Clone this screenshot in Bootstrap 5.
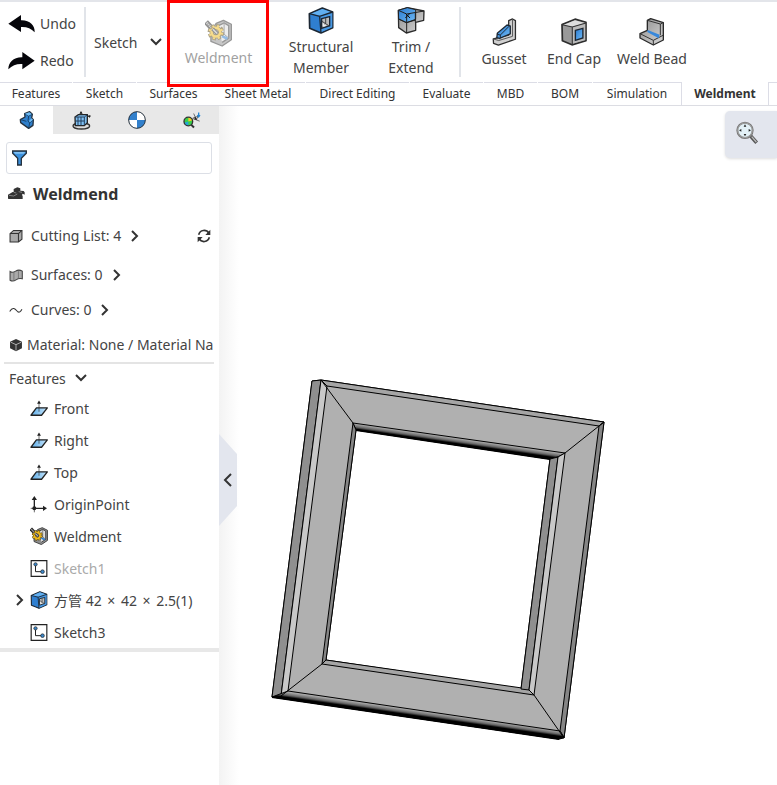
<!DOCTYPE html>
<html lang="en">
<head>
<meta charset="utf-8">
<meta name="viewport" content="width=device-width, initial-scale=1">
<title>Weldment</title>
<link href="https://cdn.jsdelivr.net/npm/bootstrap@5.3.0/dist/css/bootstrap.min.css" rel="stylesheet">
<style>
body{font-family:"Noto Sans","Noto Sans CJK SC",sans-serif;font-size:14px;line-height:21px;color:#444;overflow:hidden}
button{background:none;border:0;padding:0;color:inherit}
svg{flex:none;display:block}
.ribbon{height:82px;border-top:2px solid #e3e5ea}
.history{width:84px;padding-left:8px;gap:16px}
.rule{width:2px;background:#e1e4e9;margin:5px 0}
.group-rule{margin:5px 8px 5px 10px}
.sketch-menu{width:82px;padding-left:8px}
.tool{line-height:21px;gap:2px}
.tool-one{padding-top:2px}
.tool-weld{width:101px}
.tool-weld .face{opacity:.5}
.marker{position:absolute;top:-2px;left:-1px;right:0;height:87px;border:3px solid #f00;z-index:3}
.tool-wide{width:104px}
.tool-mid{width:76px}
.tool-sm{width:70px}
.tool-lg{width:86px}
.tabs{height:24px;border-bottom:1px solid #dcdde3;font-size:12px;line-height:22px;color:#333}
.tabs a{color:inherit;border-top:1px solid #dcdde6;margin-right:1px;height:23px}
.tabs a:nth-child(1){width:72px}
.tabs a:nth-child(2){width:63px}
.tabs a:nth-child(3){width:73px}
.tabs a:nth-child(4){width:94px}
.tabs a:nth-child(5){width:103px}
.tabs a:nth-child(6){width:73px}
.tabs a:nth-child(7){width:53px}
.tabs a:nth-child(8){width:54px}
.tabs a:nth-child(9){width:89px;border-right:1px solid #dcdde6;margin:0}
.tabs a.active{width:86px;border-top-color:#fff;font-weight:700;margin:0}
.tabs .rest{border-top:1px solid #dcdde6;border-left:1px solid #dcdde6;height:23px}
.side{width:219px;background:#fff}
.views{height:28px;background:#e8e8e8}
.views button.active{background:#fff}
.filter{margin:8px 7px 0 6px;height:32px;border:1px solid #dcdfe6;border-radius:3px;padding-left:5px}
.filter input{min-width:0;background:none;outline:0}
.side h1{font-size:16px;line-height:24px;font-weight:700;margin:8px 0 0;padding-left:8px;gap:8px;color:#333}
.facts{padding:8px 0 0 9px}
.fact{height:35px;gap:8px}
.fact.cut{height:43px}
.fact.mat{gap:4px}
.more{margin-left:2px}
.sep{height:2px;background:#e4e4e4;margin:0 5px 0 4px}
.section{height:28px;padding-left:9px;gap:8px}
.tree li{height:32px;padding-left:30px;gap:6px}
.tree li.parent{padding-left:16px}
.tree .times{padding:0 2px}
.tree .dim{color:#aaa}
.tree{border-bottom:4px solid #e8e8e8}
.stage{background:linear-gradient(90deg,#f3f3f3,#fff 20px)}
.model{position:absolute;left:52px;top:273px}
.collapse-handle{position:absolute;left:0;top:328px;width:18px;height:92px;background:#e3e6ee;clip-path:polygon(0 0,100% 20px,100% 72px,0 100%)}
.zoom-tool{position:absolute;right:0;top:5px;width:52px;height:47px;background:#e3e6ee;border-radius:5px 0 0 5px;box-shadow:0 1px 3px #ddd;padding:0 0 4px 11px}
</style>
<script src="https://cdn.jsdelivr.net/npm/bootstrap@5.3.0/dist/js/bootstrap.bundle.min.js"></script>
</head>
<body>
<svg width="0" height="0" class="position-absolute" aria-hidden="true">
<defs>
<linearGradient id="blue" x2="1" y2="1"><stop stop-color="#2b7bd0"/><stop offset="1" stop-color="#6fbaf5"/></linearGradient>
<linearGradient id="grey" x2="1" y2="1"><stop stop-color="#8d8d8d"/><stop offset="1" stop-color="#d8d8d8"/></linearGradient>
<linearGradient id="pale" x2="1"><stop stop-color="#5dade8"/><stop offset="1" stop-color="#c5e4fb"/></linearGradient>
</defs>
<symbol id="i-weld" viewBox="0 0 82 83">
<path d="M34 12 56 3 80 15V62L52 81 18 67V34Z" fill="#8e8e8e" stroke="#333" stroke-width="4" stroke-linejoin="round"/>
<path d="M40 20 58 11 72 19V57L52 70" fill="#ddd" stroke="#333" stroke-width="4"/>
<path d="M58 11V45L72 57M58 45 42 54" fill="none" stroke="#555" stroke-width="3"/>
<path d="m52 51 16 8" stroke="#2c7ccd" stroke-width="8"/>
<path d="m3 8 27 29" stroke="#222" stroke-width="16"/><path d="m5 10 24 25" stroke="#aaa" stroke-width="7" stroke-dasharray="4 2"/>
<circle cx="33" cy="39" r="20" fill="none" stroke="#5b4812" stroke-width="10" stroke-dasharray="10 5.700"/>
<circle cx="33" cy="39" r="13" fill="#ccc" stroke="#5b4812" stroke-width="13"/><circle cx="33" cy="39" r="13" fill="none" stroke="#eeb91c" stroke-width="8"/><circle cx="33" cy="39" r="19" fill="none" stroke="#eeb91c" stroke-width="6" stroke-dasharray="6 8.900" stroke-dashoffset="-2"/>
<path d="m23 29 15 15" stroke="#222" stroke-width="11"/><path d="m24 30 13 13" stroke="#bbb" stroke-width="5"/>
</symbol>
<symbol id="i-tube" viewBox="0 0 76 81">
<path d="M3 20 42 3 73 15V62L38 78 4 64Z" fill="#2f7fd0" stroke="#1c2733" stroke-width="5" stroke-linejoin="round"/>
<path d="m6 21 36-15 28 10-32 10Z" fill="#61aff0"/><path d="M35 28 72 17V61L38 76Z" fill="#4899e4"/>
<path d="M3 20 34 28 73 15M34 28 38 78" fill="none" stroke="#1c2733" stroke-width="4"/>
<path d="M40 35 64 29V56L40 64Z" fill="#bbb" stroke="#1c2733" stroke-width="4"/><path d="M41 43 63 57M52 33V48L41 62" stroke="#444" stroke-width="3" fill="none"/><path d="M43 47V60L54 56Z" fill="#eee"/>
</symbol>
<symbol id="i-plane" viewBox="0 0 56 50"><path d="M20 23H54L36 46H3Z" fill="url(#pale)" stroke="#222" stroke-width="4" stroke-linejoin="round"/><path d="M28 4V35" stroke="#222" stroke-width="2"/><path d="m28 0 6 10H22Z" fill="#222"/></symbol>
<symbol id="i-sketch" viewBox="0 0 51 51"><path d="M2 2H49V49H2Z" fill="#fff" stroke="#222" stroke-width="3.500"/><path d="M15 13V35H35" fill="none" stroke="#222" stroke-width="3"/><circle cx="15" cy="13" r="5" fill="#3b86c8" stroke="#222" stroke-width="2"/><circle cx="36" cy="35" r="5.500" fill="#3b86c8" stroke="#222" stroke-width="2"/></symbol>
<symbol id="i-next" viewBox="0 0 8 14"><path d="m1 2 5 5-5 5" fill="none" stroke="#333" stroke-width="2"/></symbol>
<symbol id="i-down" viewBox="0 0 14 10"><path d="m2 2 5 5 5-5" fill="none" stroke="#333" stroke-width="2"/></symbol>
</svg>
<div class="vh-100 d-flex flex-column">
<header class="ribbon d-flex flex-shrink-0 bg-white">
 <div class="history d-flex flex-column justify-content-center">
  <button class="d-flex align-items-center gap-1"><svg width="28" height="18" viewBox="0 0 82 54"><path d="M0 26 38 0V16C64 15 80 31 79 52 68 40 55 35 38 36V51Z" fill="#05050a"/></svg>Undo</button>
  <button class="d-flex align-items-center gap-1"><svg width="28" height="18" viewBox="0 0 82 54"><path d="M79 26 42 0V16C16 15 0 31 0 52 12 40 25 35 42 36V52Z" fill="#05050a"/></svg>Redo</button>
 </div>
 <div class="rule"></div>
 <button class="sketch-menu d-flex align-items-center gap-2">Sketch<svg class="ms-1" width="14" height="10"><use href="#i-down"/></svg></button>
 <div class="position-relative d-flex"><button class="tool tool-one tool-weld" disabled><span class="face d-flex flex-column align-items-center"><svg width="27" height="28"><use href="#i-weld"/></svg>Weldment</span></button><span class="marker pe-none"></span></div>
 <button class="tool tool-wide d-flex flex-column align-items-center justify-content-center"><svg width="26" height="27"><use href="#i-tube"/></svg><span>Structural<br>Member</span></button>
 <button class="tool tool-mid d-flex flex-column align-items-center justify-content-center"><svg width="28" height="27" viewBox="0 0 84 81"><path d="M4 10 31 2 81 12 80 40 56 46V70L28 78 5 62Z" fill="url(#grey)" stroke="#2c2c2c" stroke-width="4" stroke-linejoin="round"/><path d="M4 10 31 2 56 8V37L28 47 5 36Z" fill="url(#blue)" stroke="#222" stroke-width="3"/><path d="m4 10 25 11 52-9M29 21V78M55 17V46M5 36 29 47 56 39" fill="none" stroke="#222" stroke-width="3"/><path d="m25 19 14 14m0-14L25 33" stroke="#111" stroke-width="3"/></svg><span>Trim /<br>Extend</span></button>
 <div class="rule group-rule"></div>
 <button class="tool tool-one tool-sm d-flex flex-column align-items-center justify-content-center"><svg width="25" height="28" viewBox="0 0 74 87"><path d="M2 65 50 53V8L62 3 71 8V66L18 84 3 79Z" fill="#d0d0d0" stroke="#2d2d2d" stroke-width="4" stroke-linejoin="round"/><path d="m2 65 17 5 43-13V5" fill="none" stroke="#555" stroke-width="3"/><path d="M13 61 15 47 45 22 55 25V49L22 63Z" fill="url(#blue)" stroke="#1c2733" stroke-width="4"/><path d="m13 50 11 3 27-27M24 53V63" fill="none" stroke="#1c2733" stroke-width="3"/></svg>Gusset</button>
 <button class="tool tool-one tool-sm d-flex flex-column align-items-center justify-content-center"><svg width="26" height="28" viewBox="0 0 76 81"><path d="M3 19 41 3 73 12V66L32 78 4 66Z" fill="#999" stroke="#2d2d2d" stroke-width="5" stroke-linejoin="round"/><path d="m6 20 35-14 29 8-36 11Z" fill="#ddd"/><path d="m34 26 37-11v49l-37 11Z" fill="#bbb"/><path d="m3 19 30 7 40-12M33 26v52" fill="none" stroke="#333" stroke-width="3"/><path d="m42 36 22-6v28l-22 7Z" fill="url(#blue)" stroke="#1c2733" stroke-width="4"/></svg>End Cap</button>
 <button class="tool tool-one tool-lg d-flex flex-column align-items-center justify-content-center"><svg width="26" height="28" viewBox="0 0 78 84"><path d="M25 7 35 2 73 14V66L43 81 3 60V47L25 37Z" fill="url(#grey)" stroke="#292929" stroke-width="4" stroke-linejoin="round"/><path d="m3 47 40 20 29-15M43 67v14M25 7l39 11v34M64 18l9-4" fill="none" stroke="#333" stroke-width="3"/><path d="m26 36 36 14-3 11-34-19Z" fill="#3788dc"/></svg>Weld Bead</button>
</header>
<nav class="tabs d-flex flex-shrink-0 text-nowrap text-center" aria-label="Workbench">
<a class="text-decoration-none" href="#">Features</a><a class="text-decoration-none" href="#">Sketch</a><a class="text-decoration-none" href="#">Surfaces</a><a class="text-decoration-none" href="#">Sheet Metal</a><a class="text-decoration-none" href="#">Direct Editing</a><a class="text-decoration-none" href="#">Evaluate</a><a class="text-decoration-none" href="#">MBD</a><a class="text-decoration-none" href="#">BOM</a><a class="text-decoration-none" href="#">Simulation</a><a class="text-decoration-none active" href="#">Weldment</a><span class="rest flex-fill"></span>
</nav>
<div class="d-flex flex-fill">
<aside class="side flex-shrink-0 overflow-hidden">
 <div class="views d-flex">
  <button class="active flex-fill d-flex align-items-center justify-content-center" aria-label="Model"><svg width="16" height="18" viewBox="0 0 48 54"><path d="m17 8 15-6 8 8-2 11 5 5-1 17-13 9L5 35 4 26l14-8Z" fill="#2f7fcb" stroke="#26323e" stroke-width="4" stroke-linejoin="round"/><path d="m17 8 12 7-2 15 5 6-3 15M29 15l10-5M5 26l17 5M32 36l10-9" fill="none" stroke="#18456f" stroke-width="3"/><path d="m18 8 13-4 7 5-9 5ZM30 30l8-8 4 4-9 8Z" fill="#6ebaf2"/></svg></button>
  <button class="flex-fill d-flex align-items-center justify-content-center" aria-label="Properties"><svg width="19" height="19" viewBox="0 0 57 57"><ellipse cx="28" cy="45" rx="25" ry="9" fill="#ddd" stroke="#333" stroke-width="4"/><path d="m9 18 10-7h27v24l-9 9H10Z" fill="#7fc0f2" stroke="#252525" stroke-width="4"/><path d="M9 18H37V43M37 18 46 11M18 18V43M10 30H37M27 18V43" fill="none" stroke="#253f5c" stroke-width="3"/><path d="M27 12V3M46 18 52 15" stroke="#333" stroke-width="3"/><path d="m27 0 5 8H22ZM49 12l8 2-5 7Z" fill="#222"/></svg></button>
  <button class="flex-fill d-flex align-items-center justify-content-center" aria-label="Appearance"><svg width="18" height="18" viewBox="0 0 54 54"><circle cx="27" cy="27" r="25" fill="#fff"/><path d="M27 27V2A25 25 0 0 0 2 27ZM27 27V52A25 25 0 0 0 52 27Z" fill="#3280cc"/><circle cx="27" cy="27" r="25" fill="none" stroke="#26323e" stroke-width="3"/></svg></button>
  <button class="flex-fill d-flex align-items-center justify-content-center" aria-label="Analysis"><svg width="18" height="17" viewBox="0 0 54 50"><path d="M29 19 50 27M32 4 40 22 46 12 29 18" stroke="#333" stroke-width="2" fill="none"/><path d="m36 14 7 9-9-1Z" fill="#222"/><path d="M47 1V12M43 9l4 5 4-5" fill="none" stroke="#2686d2" stroke-width="4"/><path d="m25 38 8 8" stroke="#333" stroke-width="6"/><circle cx="16" cy="28" r="13" fill="#38cf4c"/><path d="M16 15a13 13 0 0 1 12 10l-12 3Z" fill="#eecb26"/><path d="M16 41a13 13 0 0 1-12-9l12-4Z" fill="#28a5db"/><circle cx="16" cy="28" r="13" fill="none" stroke="#333" stroke-width="4"/></svg></button>
 </div>
 <label class="filter d-flex align-items-center"><svg width="15" height="16" viewBox="0 0 45 48"><path d="M2 3H43V10L28 25V45H17V25L2 10Z" fill="#3b91de" stroke="#26323e" stroke-width="4"/><path d="M5 6h35l-5 5H9Z" fill="#80c1f3"/></svg><input class="border-0 flex-fill" type="text" aria-label="Filter"></label>
 <h1 class="d-flex align-items-center"><svg width="17" height="14" viewBox="0 0 51 40"><path d="M0 34V22l14-8h3V5l11-5 9 3v7l10 1 3 4v7l-6-3-2 4 2 3V35H3Z" fill="#333"/><path d="m3 24 14 2 11-6M32 13l10 2M17 15l8 2" stroke="#aaa" stroke-width="2" fill="none"/></svg>Weldmend</h1>
 <div class="facts text-nowrap">
  <div class="fact cut d-flex align-items-center"><svg width="14" height="14" viewBox="0 0 40 40"><path d="M3 13 13 4H37V29L27 37H3Z" fill="#aaa" stroke="#333" stroke-width="3"/><path d="M3 13H27V37M27 13 37 4" fill="none" stroke="#333" stroke-width="3"/></svg>Cutting List: 4<svg class="more" width="8" height="14"><use href="#i-next"/></svg><button class="ms-auto me-2" aria-label="Refresh"><svg width="14" height="14" viewBox="0 0 42 42"><path d="M5 17C9 2 28 0 36 13M37 25C33 40 14 42 6 29" fill="none" stroke="#333" stroke-width="5"/><path d="M40 2V18H25ZM2 40V24H17Z" fill="#333"/></svg></button></div>
  <div class="fact d-flex align-items-center"><svg width="14" height="14" viewBox="0 0 40 40"><path d="M3 10Q10 15 19 9T38 9V31Q29 28 20 34T3 35Z" fill="#aaa" stroke="#444" stroke-width="3"/><path d="M14 13V36M27 9V30" stroke="#666" stroke-width="2"/></svg>Surfaces: 0<svg class="more" width="8" height="14"><use href="#i-next"/></svg></div>
  <div class="fact d-flex align-items-center"><svg width="14" height="14" viewBox="0 0 40 40"><path d="M2 24C12 7 20 20 25 25Q31 29 37 18" fill="none" stroke="#333" stroke-width="3"/></svg>Curves: 0<svg class="more" width="8" height="14"><use href="#i-next"/></svg></div>
  <div class="fact mat d-flex align-items-center"><svg width="14" height="14" viewBox="0 0 40 40"><path d="M3 11 20 3 37 11V29L20 38 3 29Z" fill="#333"/><path d="m5 12 15 7 15-7M20 19v17" fill="none" stroke="#ddd" stroke-width="2"/></svg>Material: None / Material Na</div>
 </div>
 <div class="sep"></div>
 <button class="section d-flex align-items-center">Features<svg width="14" height="10"><use href="#i-down"/></svg></button>
 <ul class="tree list-unstyled m-0">
  <li class="d-flex align-items-center"><svg width="18" height="17"><use href="#i-plane"/></svg>Front</li>
  <li class="d-flex align-items-center"><svg width="18" height="17"><use href="#i-plane"/></svg>Right</li>
  <li class="d-flex align-items-center"><svg width="18" height="17"><use href="#i-plane"/></svg>Top</li>
  <li class="d-flex align-items-center"><svg width="18" height="17" viewBox="0 0 54 51"><path d="M13 9V37H42" fill="none" stroke="#222" stroke-width="4"/><path d="m13 0 8 12H5ZM51 37 39 45V29Z" fill="#222"/><circle cx="13" cy="37" r="6" fill="#222"/><path d="M2 37H13V49" stroke="#222" stroke-width="2" fill="none"/></svg>OriginPoint</li>
  <li class="d-flex align-items-center"><svg width="18" height="18"><use href="#i-weld"/></svg>Weldment</li>
  <li class="d-flex align-items-center"><svg width="18" height="17"><use href="#i-sketch"/></svg><span class="dim">Sketch1</span></li>
  <li class="parent d-flex align-items-center"><svg width="8" height="14"><use href="#i-next"/></svg><svg width="18" height="18"><use href="#i-tube"/></svg><span>方管 42 <span class="times">×</span> 42 <span class="times">×</span> 2.5(1)</span></li>
  <li class="d-flex align-items-center"><svg width="18" height="17"><use href="#i-sketch"/></svg>Sketch3</li>
 </ul>
</aside>
<main class="stage position-relative flex-fill overflow-hidden">
 <svg class="model" width="335" height="362" viewBox="271 379 335 362" role="img" aria-label="Square tube frame">
  <defs>
   <linearGradient id="under" gradientUnits="userSpaceOnUse" x1="420" y1="711" x2="419" y2="718"><stop stop-color="#aaa"/><stop offset=".45" stop-color="#666"/><stop offset=".75" stop-color="#000"/></linearGradient>
   <linearGradient id="lip" gradientUnits="userSpaceOnUse" x1="455" y1="438" x2="454" y2="445"><stop stop-color="#aaa"/><stop offset=".45" stop-color="#666"/><stop offset=".75" stop-color="#000"/></linearGradient>
  </defs>
  <g stroke="#000" stroke-linejoin="round">
   <path d="M312 381 321 380 604 422 564 738 559 739 272 697ZM356 430 326 660 521 689 550 459Z" fill="#b0b0b0" fill-rule="evenodd"/>
   <path d="M312 381 321 380 281 696 272 697Z" fill="#8f8f8f"/>
   <path d="M321 380 327 386 288 691 281 696Z" fill="#c8c8c8"/>
   <path d="M321 380 604 422 599 426 327 386Z" fill="#a5a5a5"/>
   <path d="M604 422 564 738 560 731 599 426Z" fill="#858585"/>
   <path d="M288 691 560 731 564 737 559 739 272 697Z" fill="url(#under)"/>
   <path d="M353 423 565 453 558 457 550 459 356 430Z" fill="url(#lip)"/>
   <path d="M353 423 356 430 326 660 322 664Z" fill="#858585"/>
   <path d="M322 664 326 660 529 689 534 695Z" fill="#a5a5a5"/>
   <path d="M550 459 558 457 529 690 521 689Z" fill="#8f8f8f"/>
   <path d="M558 457 565 453 534 695 529 690Z" fill="#c8c8c8"/>
   <path d="M321 380 353 423M604 422 565 453M281 696 322 664M564 738 534 695" fill="none"/>
   <path d="M272 697 559 739M356 430 550 459" fill="none" stroke-width="2"/>
  </g>
 </svg>
 <button class="collapse-handle d-flex align-items-center justify-content-center" aria-label="Collapse panel"><svg width="10" height="16" viewBox="0 0 10 16"><path d="m8 2-6 6 6 6" fill="none" stroke="#333" stroke-width="2"/></svg></button>
 <button class="zoom-tool" aria-label="Zoom to fit"><svg width="24" height="24" viewBox="0 0 72 72"><path d="m44 45 18 20" stroke="#555" stroke-width="11"/><path d="m47 47 14 16" stroke="#bbb" stroke-width="4"/><circle cx="27" cy="28" r="23" fill="#e3f1f7" stroke="#777" stroke-width="6"/><circle cx="27" cy="28" r="22" fill="none" stroke="#bbb" stroke-width="2"/><path d="m27 10 4 7h-8ZM27 46l4-7h-8ZM9 28l7-4v8ZM45 28l-7-4v8Z" fill="#222"/></svg></button>
</main>
</div>
</div>
</body>
</html>
